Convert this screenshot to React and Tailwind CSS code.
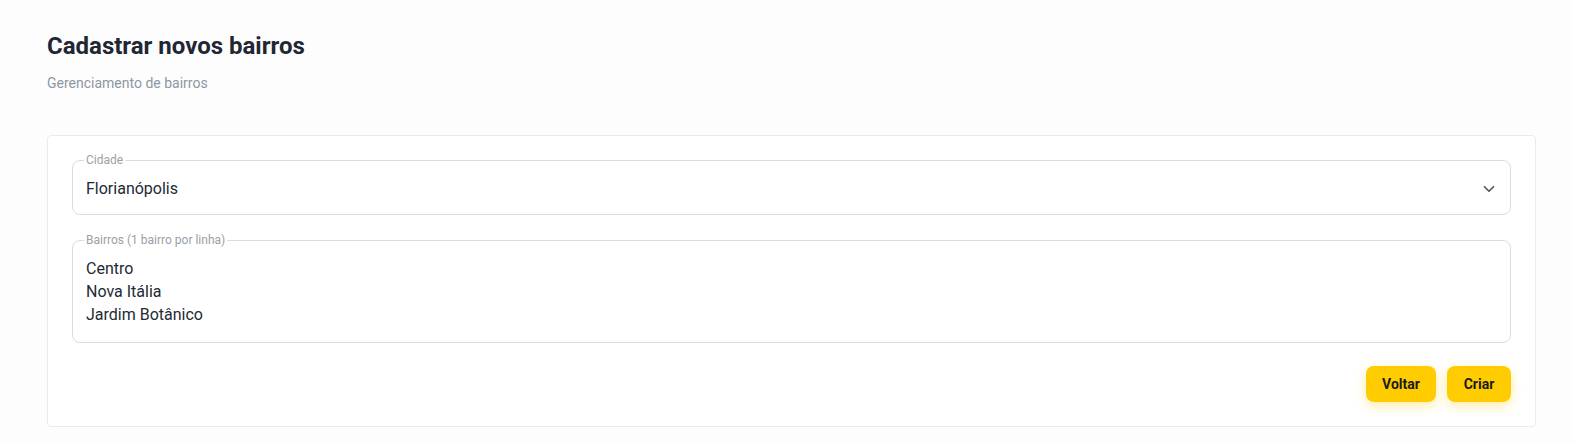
import { ChevronDown } from 'lucide-react';

const BAIRROS = ['Centro', 'Nova Itália', 'Jardim Botânico'];

export default function App() {
  return (
    <div className="min-h-[443px] bg-[#fdfdfd] px-[47px] pt-[31px] font-['Roboto',sans-serif]">
      {/* Header */}
      <h1 className="text-[24px] font-bold leading-[30px] text-[#1f2733]">Cadastrar novos bairros</h1>
      <p className="mt-[13px] text-[14px] leading-[18px] text-[#8d96a3]">Gerenciamento de bairros</p>

      {/* Card */}
      <div className="mt-[43px] w-[1489px] rounded border border-[#ebebeb] bg-white px-6 pt-[22px] pb-[24px]">
        <fieldset className="h-[57px] rounded-lg border border-[#dcdcdc] pr-[12px] pl-[13px]">
          <legend className="-ml-[2px] px-[2px] text-[12px] leading-[4px] text-[#9aa0a8]">Cidade</legend>
          <div className="flex h-full items-center justify-between pt-[2px]">
            <span className="text-[16px] text-[#232a33]">Florianópolis</span>
            <ChevronDown className="h-[18px] w-[18px] text-[#4b5563]" strokeWidth={2.2} />
          </div>
        </fieldset>

        <fieldset className="mt-[23px] h-[105px] rounded-lg border border-[#dcdcdc] px-[13px]">
          <legend className="-ml-[2px] px-[2px] text-[12px] leading-[4px] text-[#9aa0a8]">Bairros (1 bairro por linha)</legend>
          <div className="pt-[15px] text-[16px] leading-[23px] text-[#232a33]">
            {BAIRROS.map(b => (
              <div key={b}>{b}</div>
            ))}
          </div>
        </fieldset>

        <div className="mt-[23px] flex justify-end gap-[11px]">
          <button className="h-[36px] w-[70px] rounded-lg bg-[#ffcc00] text-[14px] font-bold text-[#1a1a1a] shadow-[0_4px_12px_rgba(255,204,0,0.35)]">
            Voltar
          </button>
          <button className="h-[36px] w-[64px] rounded-lg bg-[#ffcc00] text-[14px] font-bold text-[#1a1a1a] shadow-[0_4px_12px_rgba(255,204,0,0.35)]">
            Criar
          </button>
        </div>
      </div>
    </div>
  );
}
